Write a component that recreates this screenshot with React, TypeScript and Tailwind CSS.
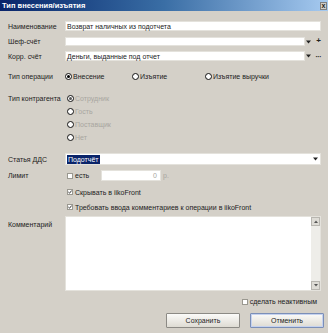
import React from 'react';

const font = { fontFamily: '"Liberation Sans", Arial, sans-serif' };

function Radio({ checked, label, disabled }: { checked?: boolean; label: string; disabled?: boolean }) {
  return (
    <div className="flex items-center">
      <span className="w-[7px] h-[7px] rounded-full border-[1.5px] border-[#111] bg-white flex items-center justify-center">
        {checked && <span className={`w-[3px] h-[3px] rounded-full ${disabled ? 'bg-[#555]' : 'bg-black'}`} />}
      </span>
      <span className={`ml-[1px] ${disabled ? 'text-[#a8a6a0]' : 'text-[#222]'}`}>{label}</span>
    </div>
  );
}

function Checkbox({ checked, label }: { checked?: boolean; label: string }) {
  return (
    <div className="flex items-center">
      <span className="w-[6px] h-[6px] border border-[#9a9890] bg-white flex items-center justify-center">
        {checked && (
          <svg width="6" height="6" viewBox="0 0 6 6">
            <path d="M0.5 3 L2.3 4.8 L5.5 0.8" stroke="#111" strokeWidth="1.3" fill="none" />
          </svg>
        )}
      </span>
      <span className="ml-[2px] text-[#222]">{label}</span>
    </div>
  );
}

function Arrow() {
  return (
    <svg width="5" height="4" viewBox="0 0 5 4">
      <path d="M0 0.5 H5 L2.5 3.5 Z" fill="#222" />
    </svg>
  );
}

export default function App() {
  return (
    <div className="w-[328px] h-[333px] bg-[#d4d0c8] overflow-hidden text-[7px] leading-none" style={font}>
      <div className="h-[11px] flex items-center justify-between bg-gradient-to-r from-[#0a246a] via-[#3a6ea5] to-[#a6caf0] pl-[2px] pr-[1px]">
        <span className="text-white font-bold text-[7.5px]">Тип внесения/изъятия</span>
        <span className="w-[7px] h-[8px] bg-[#d4d0c8] border border-[#808080] flex items-center justify-center text-[7px] font-bold text-[#222]">x</span>
      </div>

      <div className="pl-[8px] pr-[7px]">
        <div className="mt-[10px] h-[10px] flex items-center">
          <span className="w-[57px] text-[#222]">Наименование</span>
          <div className="flex-1 h-full bg-white border border-[#e4e2dc] flex items-center pl-[1px] text-[#222]">
            Возврат наличных из подотчета
          </div>
        </div>

        <div className="mt-[6px] h-[9px] flex items-center">
          <span className="w-[57px] text-[#222]">Шеф-счёт</span>
          <div className="flex-1 h-full bg-white border border-[#e4e2dc]" />
          <div className="w-[16px] flex items-center justify-between pl-[1px]">
            <Arrow />
            <span className="text-[8px] font-bold text-[#222] -mt-[1px]">+</span>
          </div>
        </div>

        <div className="mt-[5px] h-[10px] flex items-center">
          <span className="w-[57px] text-[#222]">Корр. счёт</span>
          <div className="flex-1 h-full bg-white border border-[#e4e2dc] flex items-center pl-[1px] text-[#222]">
            Деньги, выданные под отчет
          </div>
          <div className="w-[16px] flex items-center justify-between pl-[1px]">
            <Arrow />
            <span className="text-[7px] font-bold text-[#222] tracking-[-0.5px]">···</span>
          </div>
        </div>

        <div className="mt-[10px] h-[10px] flex items-center">
          <span className="w-[57px] text-[#222]">Тип операции</span>
          <div className="w-[67px]"><Radio checked label="Внесение" /></div>
          <div className="w-[73px]"><Radio label="Изъятие" /></div>
          <Radio label="Изъятие выручки" />
        </div>

        <div className="mt-[11px] flex">
          <span className="w-[59px] h-[13px] flex items-center text-[#222]">Тип контрагента</span>
          <div className="flex flex-col">
            <div className="h-[13px] flex items-center"><Radio disabled checked label="Сотрудник" /></div>
            <div className="h-[13px] flex items-center"><Radio disabled label="Гость" /></div>
            <div className="h-[13px] flex items-center"><Radio disabled label="Поставщик" /></div>
            <div className="h-[13px] flex items-center"><Radio disabled label="Нет" /></div>
          </div>
        </div>

        <div className="mt-[9px] h-[12px] flex items-center">
          <span className="w-[57px] text-[#222]">Статья ДДС</span>
          <div className="flex-1 h-full bg-white border border-[#e4e2dc] flex items-center pl-[1px] pr-[2px]">
            <span className="bg-[#0a246a] text-white px-[1px] py-[1px]">Подотчёт</span>
            <span className="flex-1" />
            <Arrow />
          </div>
        </div>

        <div className="mt-[5px] h-[11px] flex items-center">
          <span className="w-[59px] text-[#222]">Лимит</span>
          <div className="w-[34px]"><Checkbox label="есть" /></div>
          <div className="w-[60px] h-full bg-white border border-[#e4e2dc] flex items-center justify-end pr-[3px] text-[#a8a6a0]">0</div>
          <span className="ml-[2px] text-[#a8a6a0]">р.</span>
        </div>

        <div className="mt-[6px] h-[10px] flex items-center pl-[59px]">
          <Checkbox checked label="Скрывать в iikoFront" />
        </div>

        <div className="mt-[5px] h-[10px] flex items-center pl-[59px]">
          <Checkbox checked label="Требовать ввода комментариев к операции в iikoFront" />
        </div>

        <div className="mt-[4px] h-[75px] flex">
          <span className="w-[57px] pt-[5px] text-[#222]">Комментарий</span>
          <div className="flex-1 h-full bg-white border border-[#e4e2dc] flex justify-end">
            <div className="w-[9px] h-full bg-[#eeede9] flex flex-col justify-between">
              <div className="h-[9px] bg-[#dedcd6] border border-[#b8b6b0] flex items-center justify-center">
                <svg width="4" height="3" viewBox="0 0 4 3"><path d="M0 3 H4 L2 0.5 Z" fill="#555" /></svg>
              </div>
              <div className="h-[9px] bg-[#dedcd6] border border-[#b8b6b0] flex items-center justify-center">
                <svg width="4" height="3" viewBox="0 0 4 3"><path d="M0 0 H4 L2 2.5 Z" fill="#555" /></svg>
              </div>
            </div>
          </div>
        </div>

        <div className="mt-[6px] h-[9px] flex items-center justify-end pr-[4px]">
          <Checkbox label="сделать неактивным" />
        </div>

        <div className="mt-[7px] h-[15px] flex justify-end gap-[10px] pr-[-3px] -mr-[3px]">
          <button className="w-[74px] h-full bg-gradient-to-b from-[#fbfbf9] to-[#dedbd3] border border-[#8c8a85] rounded-[1px] text-[#222] text-[7px]">
            Сохранить
          </button>
          <button className="w-[74px] h-full bg-gradient-to-b from-[#fbfbf9] to-[#dedbd3] border border-[#7b8fb8] shadow-[inset_0_0_0_1px_#c5d2ef] rounded-[1px] text-[#222] text-[7px]">
            Отменить
          </button>
        </div>
      </div>
    </div>
  );
}
